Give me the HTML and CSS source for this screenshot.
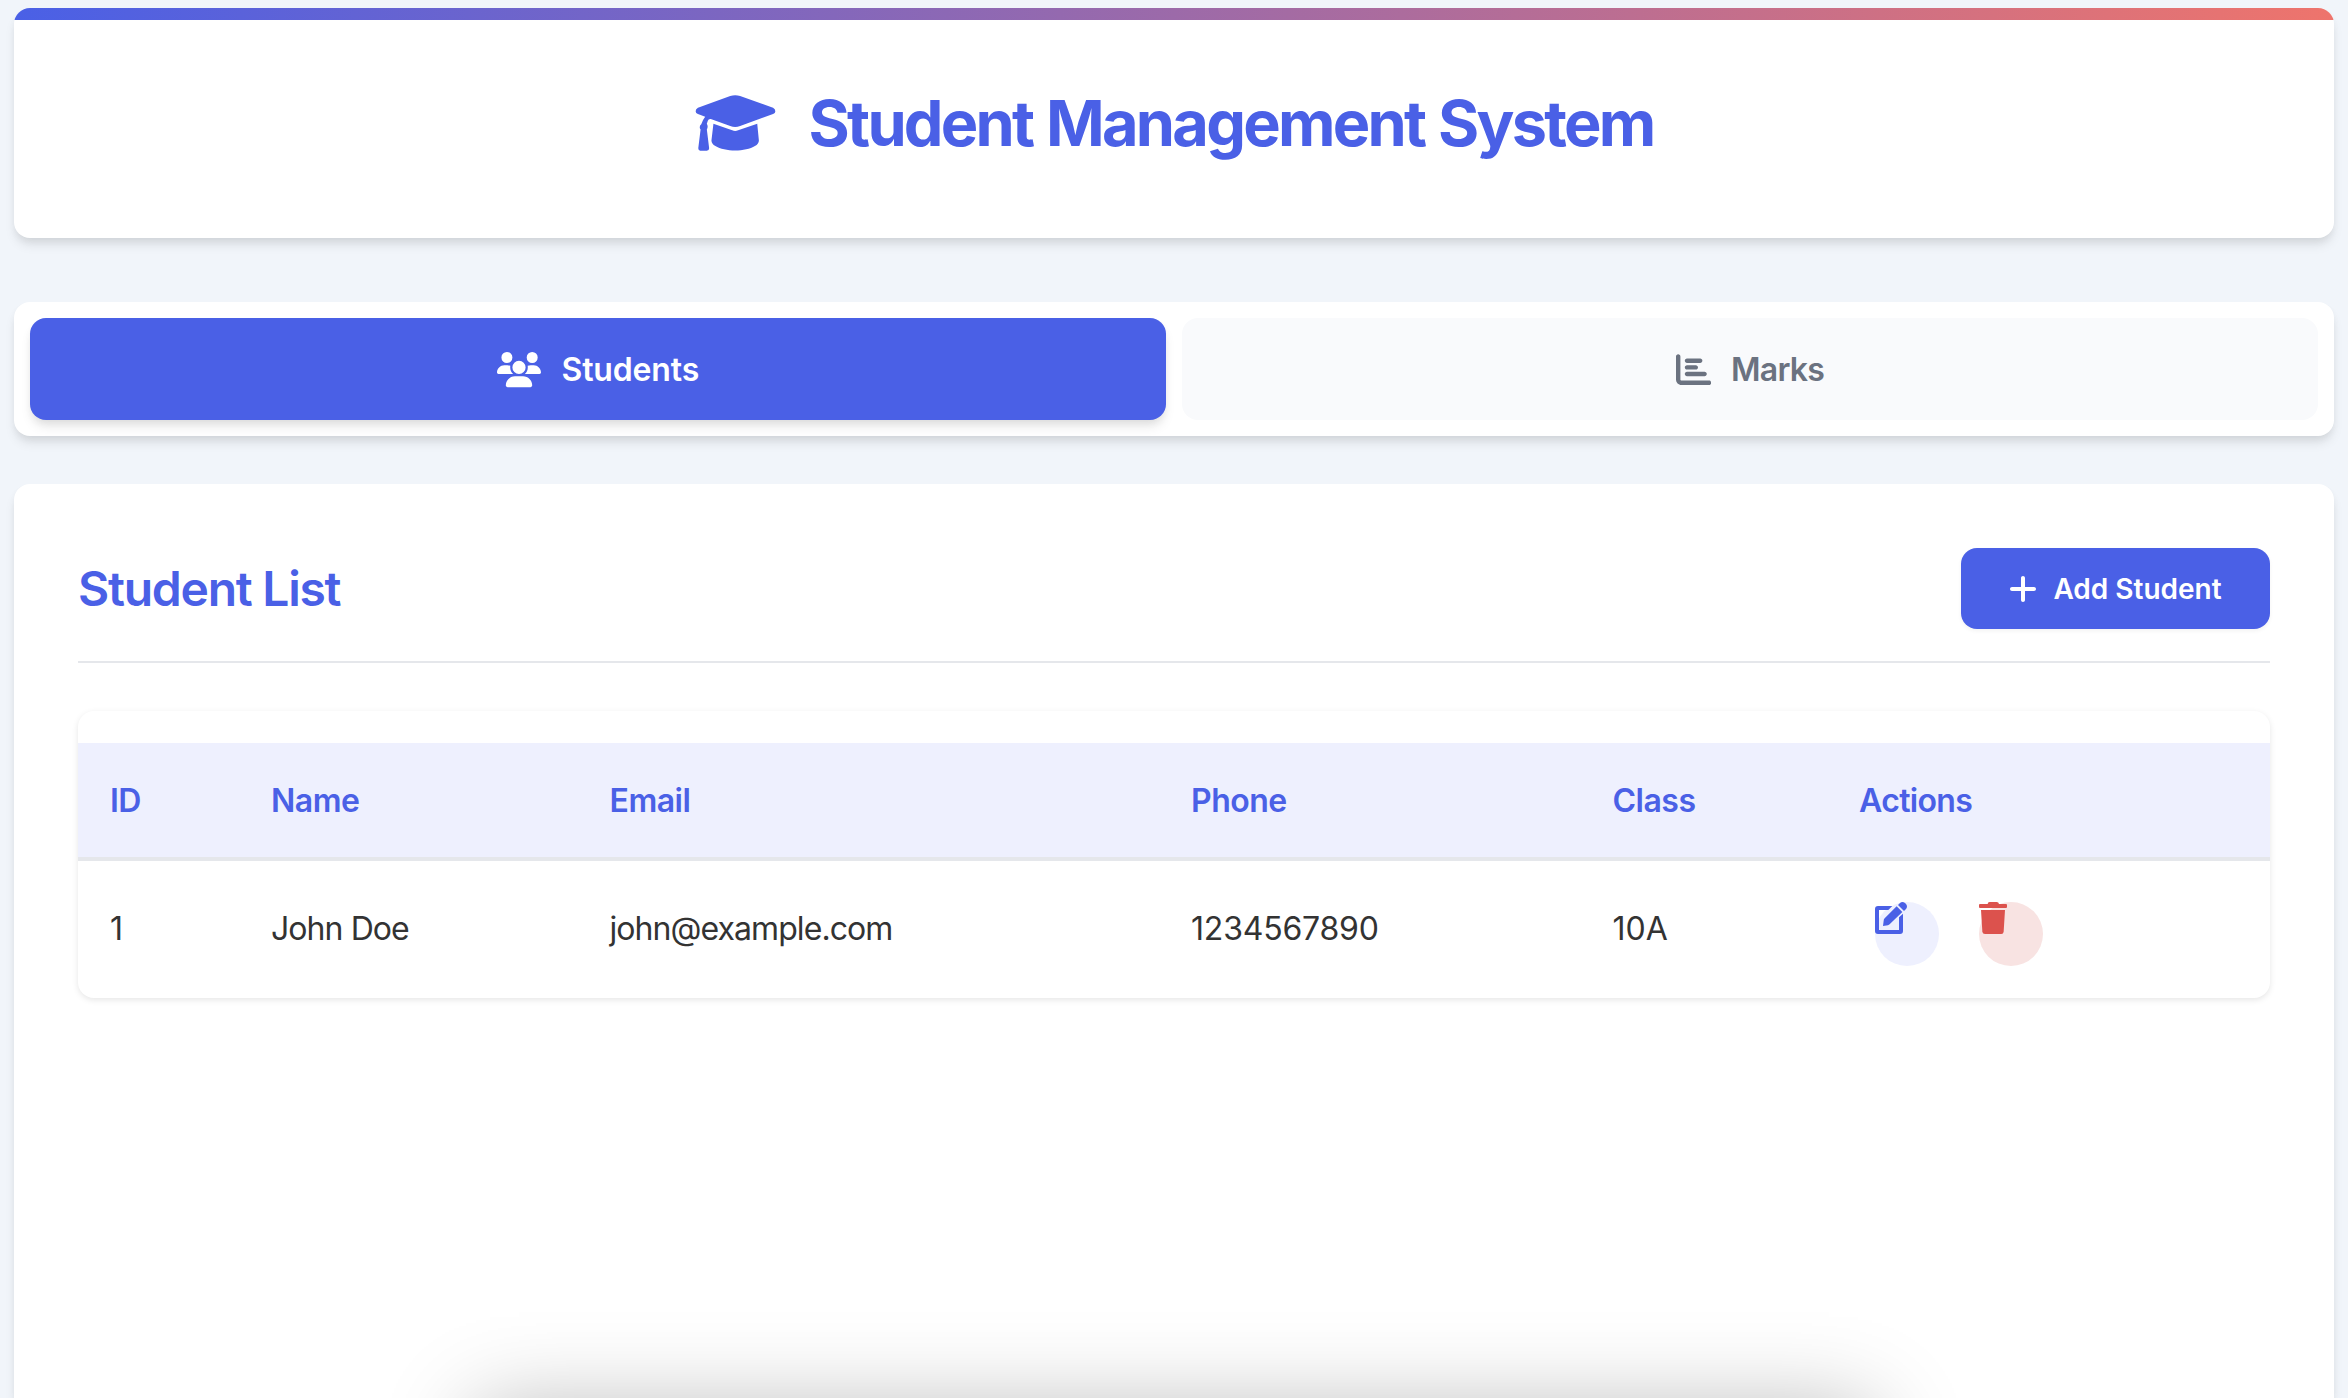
FILE: index.html
```html
<!DOCTYPE html>
<html lang="en">
<head>
<meta charset="utf-8">
<title>Student Management System</title>
<link rel="stylesheet" href="styles.css">
</head>
<body>
<header class="header">
  <svg class="cap" viewBox="72 74 244 170" fill="currentColor"><path d="M178 77Q193 73 208 77L308 113Q315 117 315 123Q315 129 308 132L208 168Q193 174 178 168L119 147Q112 146 110 152L107 161Q112 170 107 179L114 236Q114 243 107 243H87Q81 243 81 236L88 179Q82 170 90 163Q94 150 102 140L80 132Q73 129 73 123Q73 117 80 113Z"/><path d="M127 161L184 181Q193 185 202 181L260 161L265 212Q265 222 253 229C225 247 161 247 133 229Q121 222 121 212Z"/></svg>
  <h1 class="title">Student Management System</h1>
</header>
<nav class="tabs">
  <button class="tab tab-active">
    <svg class="tab-icon wide" viewBox="0 0 640 512" fill="currentColor"><path d="M144 0a80 80 0 1 1 0 160A80 80 0 1 1 144 0zM512 0a80 80 0 1 1 0 160A80 80 0 1 1 512 0zM0 298.7C0 239.8 47.8 192 106.7 192l42.7 0c15.9 0 31 3.5 44.6 9.7c-1.3 7.2-1.9 14.7-1.9 22.3c0 38.2 16.8 72.5 43.3 96c-.2 0-.4 0-.7 0L21.3 320C9.6 320 0 310.4 0 298.7zM405.3 320c-.2 0-.4 0-.7 0c26.6-23.5 43.3-57.8 43.3-96c0-7.6-.7-15-1.9-22.3c13.6-6.3 28.7-9.7 44.6-9.7l42.7 0C592.2 192 640 239.8 640 298.7c0 11.8-9.6 21.3-21.3 21.3l-213.3 0zM224 224a96 96 0 1 1 192 0 96 96 0 1 1 -192 0zM128 485.3C128 411.7 187.7 352 261.3 352l117.3 0C452.3 352 512 411.7 512 485.3c0 14.7-11.9 26.7-26.7 26.7l-330.7 0c-14.7 0-26.7-11.9-26.7-26.7z"/></svg>
    <span>Students</span>
  </button>
  <button class="tab tab-marks">
    <svg class="tab-icon" viewBox="0 0 512 512" fill="currentColor"><path d="M32 32c17.7 0 32 14.3 32 32l0 336c0 8.8 7.2 16 16 16l400 0c17.7 0 32 14.3 32 32s-14.3 32-32 32L80 480c-44.2 0-80-35.8-80-80L0 64C0 46.3 14.3 32 32 32zm96 96c0-17.7 14.3-32 32-32l192 0c17.7 0 32 14.3 32 32s-14.3 32-32 32l-192 0c-17.7 0-32-14.3-32-32zm32 64l128 0c17.7 0 32 14.3 32 32s-14.3 32-32 32l-128 0c-17.7 0-32-14.3-32-32s14.3-32 32-32zm0 96l256 0c17.7 0 32 14.3 32 32s-14.3 32-32 32l-256 0c-17.7 0-32-14.3-32-32s14.3-32 32-32z"/></svg>
    <span>Marks</span>
  </button>
</nav>
<main class="card">
  <div class="card-head">
    <h2 class="subtitle">Student List</h2>
    <button class="add">
      <svg class="plus" viewBox="0 0 448 512" fill="currentColor"><path d="M256 80c0-17.7-14.3-32-32-32s-32 14.3-32 32l0 144L48 224c-17.7 0-32 14.3-32 32s14.3 32 32 32l144 0 0 144c0 17.7 14.3 32 32 32s32-14.3 32-32l0-144 144 0c17.7 0 32-14.3 32-32s-14.3-32-32-32l-144 0 0-144z"/></svg>
      <span>Add Student</span>
    </button>
  </div>
  <div class="table-wrap">
    <table class="table">
      <colgroup><col class="c1"><col class="c2"><col class="c3"><col class="c4"><col class="c5"><col></colgroup>
      <thead>
        <tr><th>ID</th><th>Name</th><th>Email</th><th>Phone</th><th>Class</th><th class="th-actions">Actions</th></tr>
      </thead>
      <tbody>
        <tr>
          <td>1</td><td class="text">John Doe</td><td class="text">john@example.com</td><td class="num">1234567890</td><td>10A</td>
          <td class="td-actions">
            <div class="actions">
              <span class="action edit"><svg viewBox="45 30 96 96" width="32" height="32" fill="currentColor"><path d="M54 42H97L85 54H57V114H117V76L129 65V117Q129 126 120 126H54Q45 126 45 117V51Q45 42 54 42Z"/><path d="M69 102L71 86Q71 82 74 79L110 43L127 60L92 94Q88 99 84 100Z"/><path d="M114 39L120 33Q127 27 135 33L138 36Q144 43 138 51L132 57Z"/></svg></span>
              <span class="action del"><svg viewBox="357 30 84 96" width="28" height="32" fill="currentColor"><path d="M383 36Q383 30 389 30H410Q416 30 417 36H438Q441 36 441 39V45Q441 48 438 48H360Q357 48 357 45V39Q357 36 360 36Z"/><path d="M363 54H435L431 119Q430 126 424 126H375Q368 126 367 119Z"/></svg></span>
            </div>
          </td>
        </tr>
      </tbody>
    </table>
  </div>
</main>
<div class="sheet"></div>
</body>
</html>
```
FILE: styles.css
```css
* { box-sizing: border-box; margin: 0; padding: 0; }
html { overflow: hidden; }
body { position: relative; height: 1398px; overflow: hidden; padding: 8px 14px 0; background: #f1f5fa; color: #333; font: 400 32px/1.6 Inter, "Liberation Sans", sans-serif; }
button { border: 0; font: inherit; }
.header, .tabs, .card { background: #fff; border-radius: 16px; box-shadow: 0 8px 12px -2px rgba(0,0,0,.1), 0 4px 8px -2px rgba(0,0,0,.06); }
.header { position: relative; display: flex; align-items: center; justify-content: center; gap: 33px; height: 230px; }
.header::before { content: ""; position: absolute; inset: 0; border-radius: 16px; background: linear-gradient(90deg, #4a60e6, #ee746c) 0 0 / 100% 12px no-repeat; }
.cap { width: 81px; height: 56px; color: #4a60e6; }
.title { padding-top: 2px; font-size: 63px; font-weight: 700; letter-spacing: -2.75px; word-spacing: 1.5px; color: #4a60e6; line-height: 1.2; }
.tabs { display: flex; gap: 16px; height: 134px; margin-top: 64px; padding: 16px; }
.tab { flex: 1; display: flex; align-items: center; justify-content: center; gap: 20.6px; padding-top: 2px; border-radius: 16px; background: #f9fafc; color: #6b7280; font-weight: 600; letter-spacing: -.15px; }
.tab-active { background: #4a60e6; color: #fff; box-shadow: 0 8px 12px -2px rgba(0,0,0,.1), 0 4px 8px -2px rgba(0,0,0,.06); }
.tab-marks { gap: 20px; letter-spacing: -.75px; }
.tab-icon { width: 35.2px; height: 35.2px; }
.wide { width: 44px; }
.card { height: 914px; margin-top: 48px; padding: 64px 64px 0; border-radius: 16px 16px 0 0; }
.card-head { display: flex; justify-content: space-between; align-items: flex-start; height: 115px; border-bottom: 2px solid #e5e7eb; }
.subtitle { font-size: 48px; font-weight: 600; letter-spacing: -1.25px; color: #4a60e6; line-height: 81px; }
.add { display: flex; align-items: center; justify-content: center; gap: 16px; width: 309px; height: 81px; padding-top: 1px; border-radius: 16px; background: #4a60e6; color: #fff; font-size: 28px; font-weight: 600; box-shadow: 0 2px 4px rgba(0,0,0,.05); }
.plus { width: 28px; height: 32px; }
.table-wrap { margin-top: 48px; height: 287px; padding-top: 32px; border-radius: 16px; overflow: hidden; box-shadow: 0 2px 6px rgba(0,0,0,.1); }
.table { width: 100%; table-layout: fixed; border-collapse: separate; border-spacing: 0; text-align: left; }
.c1 { width: 161px; }
.c2 { width: 338.5px; }
.c3 { width: 581.5px; }
.c4 { width: 421.5px; }
.c5 { width: 246.5px; }
.table th { height: 118px; padding: 2px 32px 0; background: #eef0fe; border-bottom: 4px solid #e5e7eb; color: #4a60e6; font-weight: 600; letter-spacing: -.5px; }
.table .th-actions { letter-spacing: -.65px; }
.table td { height: 137px; padding: 0 32px 2px; }
.table .text { letter-spacing: -.93px; }
.table .num { letter-spacing: -.2px; }
.table .td-actions { padding: 41px 32px 0; vertical-align: top; }
.actions { display: flex; gap: 40px; padding-left: 16px; }
.action { display: flex; width: 64px; height: 64px; border-radius: 50%; }
.edit { background: #eef0fe; color: #4a60e6; }
.del { background: #f8e3e2; color: #dc524d; }
.sheet { position: absolute; left: 476px; top: 1410px; width: 1396px; height: 300px; box-shadow: 0 0 86px rgba(0,0,0,.29); }
```
